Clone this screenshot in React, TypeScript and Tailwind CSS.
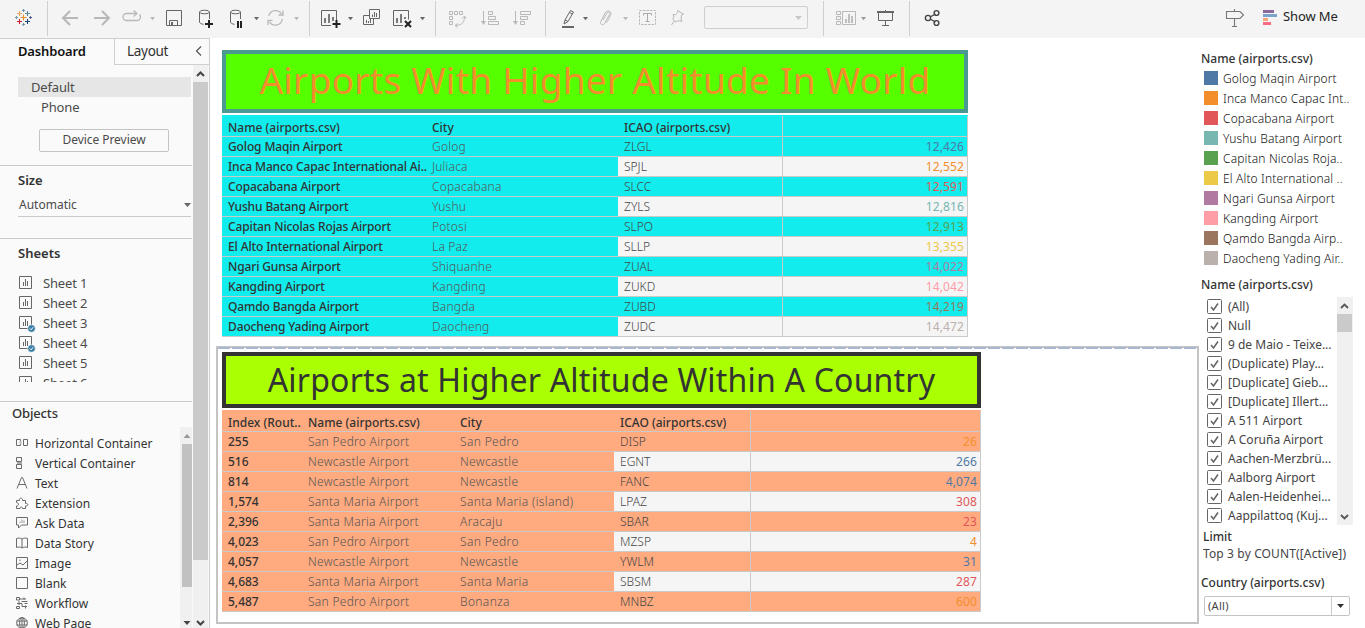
import React from "react";

const Slot = ({ x, w, children }: { x: number; w: number; children?: React.ReactNode }) => (
  <svg width={w} height={38} viewBox={`${x} 0 ${w} 38`} fill="none" className="shrink-0">
    {children}
  </svg>
);
const Caret = ({ x, c = "#666" }: { x: number; c?: string }) => <path d={`M${x} 17h5l-2.5 3.2z`} fill={c} />;
const Sep = () => <div className="mt-px h-[35px] w-px shrink-0 bg-[#cfcfcf]" />;

const D = "#666";
const G = "#b8b8b8";

function Cross({ x, y, r, c }: { x: number; y: number; r: number; c: string }) {
  return <path d={`M${x - r} ${y}h${2 * r}M${x} ${y - r}v${2 * r}`} stroke={c} strokeWidth="1.1" />;
}

function Toolbar() {
  return (
    <header className="flex h-[38px] shrink-0 bg-[#f4f4f4]">
      <Slot x={0} w={47}>
        <Cross x={23.5} y={17.5} r={3} c="#eb912c" />
        <Cross x={19.5} y={13.5} r={2.5} c="#e8a55c" />
        <Cross x={27.5} y={13.5} r={2.5} c="#59879b" />
        <Cross x={19.5} y={21.5} r={2.5} c="#c72037" />
        <Cross x={27.5} y={21.5} r={2.5} c="#1f447e" />
        <Cross x={23.5} y={10.5} r={1.5} c="#7099a5" />
        <Cross x={23.5} y={24.5} r={1.5} c="#7199a6" />
        <Cross x={16.5} y={17.5} r={1.5} c="#7199a6" />
        <Cross x={30.5} y={17.5} r={1.5} c="#5b6591" />
      </Slot>
      <Sep />
      <Slot x={48} w={70}>
        <path d="M78 18H63M70 11l-7 7 7 7M94 18h15M102 11l7 7-7 7" stroke={G} strokeWidth="2" />
      </Slot>
      <Slot x={118} w={42}>
        <path d="M136 13.500h-9.500a3.500 3.500 0 0 0 0 7h10.500a3.500 3.500 0 0 0 3.500-3.500c0-1-.3-1.800-1-2.500" stroke={G} strokeWidth="1.300" />
        <path d="M133.500 10.500l3.500 3-3.500 3" stroke={G} strokeWidth="1.200" />
        <Caret x={150} c={G} />
      </Slot>
      <Slot x={160} w={30}>
        <path d="M166.500 10.500h15v15h-15zM169.500 25v-4.500h8V25" stroke={D} />
        <path d="M171 22h2v3h-2z" fill={D} />
      </Slot>
      <Slot x={190} w={73}>
        <path d="M199.500 12v10c0 1 1.500 2 4 2.300M209.500 12v7" stroke={D} />
        <ellipse cx="204.500" cy="12" rx="5" ry="1.800" stroke={D} />
        <path d="M205 24h8M209 20v8" stroke="#222" strokeWidth="2" />
        <path d="M230.500 12v10c0 1 1.500 2 4 2.300M240.500 12v7" stroke={D} />
        <ellipse cx="235.500" cy="12" rx="5" ry="1.800" stroke={D} />
        <path d="M238 21v7M241 21v7" stroke="#222" strokeWidth="2" />
        <Caret x={254} />
      </Slot>
      <Slot x={263} w={46}>
        <path d="M268.800 16a7 7 0 0 1 12.800-2M282.300 19a7 7 0 0 1-12.800 3" stroke={G} strokeWidth="1.300" />
        <path d="M283 10.500v4.500h-4.500M268 25v-4.500h4.500" stroke={G} strokeWidth="1.300" />
        <Caret x={294} c={G} />
      </Slot>
      <Sep />
      <Slot x={310} w={125}>
        <path d="M331 25.500h-9.500v-15h15v10" stroke={D} />
        <path d="M325 23v-5M329 23v-9M333 21v-4" stroke={D} strokeWidth="1.700" />
        <path d="M332.500 24h8M336.500 20v8" stroke="#222" strokeWidth="2" />
        <Caret x={348} />
        <path d="M369.500 9.500h10v9h-10zM369 15.500h-5.500v9h10V19" stroke={D} />
        <path d="M372.500 17v-2.500M374.500 17v-5M376.500 17v-4M366.500 23v-3M368.500 23v-2M370.500 23v-4" stroke={D} />
        <path d="M403 25.500h-9.500v-15h15v9" stroke={D} />
        <path d="M397 23v-5M401 23v-9M405 19v-2" stroke={D} strokeWidth="1.700" />
        <path d="M405 21l6 6M411 21l-6 6" stroke="#222" strokeWidth="2" />
        <Caret x={420} />
      </Slot>
      <Sep />
      <Slot x={436} w={109}>
        <path d="M449.500 11.500h3v3h-3zM454.500 11.500h3v3h-3zM459.500 11.500h3v3h-3zM449.500 16.500h3v3h-3zM449.500 21.500h3v3h-3z" stroke={G} />
        <path d="M464.500 17c0 5-2.500 8-8.500 8.500M462 18.500l2.500-2.500 2 2.500M457.500 23.500l-2.500 2 2.500 2" stroke={G} />
        <path d="M483.500 11v12M488.500 11.500h4v3h-4zM488.500 16.500h7v3h-7zM488.500 21.500h10v3h-10z" stroke={G} />
        <path d="M481 21h5l-2.500 4z" fill={G} />
        <path d="M515.500 11v12M520.500 11.500h10v3h-10zM520.500 16.500h7v3h-7zM520.500 21.500h4v3h-4z" stroke={G} />
        <path d="M513 21h5l-2.500 4z" fill={G} />
      </Slot>
      <Sep />
      <Slot x={546} w={152}>
        <path d="M562 27h12" stroke={D} strokeWidth="2" />
        <path d="M564 24l1-4 5.500-9.500 3 1.500-5.500 9.500zM565 20l3 1.500M569.500 12.500l3 1.500" stroke={D} />
        <Caret x={583} />
        <path d="M603 20l4-7c1-1.700 3.500-.5 2.500 1.500l-5 9c-1.500 2.500-5 .8-3.800-1.800l4.300-8.500c1.500-3.500 6.500-2.500 6 1-.2 1-3.500 7-4.500 8.500" stroke={G} />
        <Caret x={623} c={G} />
        <path d="M639.500 10.500h16v14h-16z" stroke={G} strokeDasharray="2.500 1" />
        <path d="M643.500 15.500v-2h8v2M647.500 13.500v8M645.500 21.500h4" stroke="#aaa" />
        <path d="M677.500 10.500l6 3.500-2 1-.5 4 .8 2.500-3.500-.8-2.500 1.300-3.300-3 1.500-2-1-2.500 2.500.3 2.500-2.500zM675 20l-3.500 5" stroke={G} />
      </Slot>
      <div className="ml-[6px] mt-[6px] flex h-[23px] w-[104px] shrink-0 items-center justify-end rounded-[2px] border border-[#cfcfcf] pr-[5px]">
        <svg width="7" height="4"><path d="M0 0h7L3.500 4z" fill="#c8c8c8" /></svg>
      </div>
      <div className="w-[15px] shrink-0" />
      <Sep />
      <Slot x={824} w={85}>
        <path d="M836.500 11.500h4v3h-4zM836.500 16.500h4v3h-4zM836.500 21.500h4v3h-4zM842.500 11.500h13v13h-13z" stroke={G} />
        <path d="M846 23v-4M849 23v-9M852 23v-7" stroke={G} strokeWidth="1.800" />
        <Caret x={861} c="#999" />
        <path d="M877 12h17" stroke={D} strokeWidth="2" />
        <path d="M885.500 10v2M878.500 13v7.500h14V13M885.500 21v4M882 25.500h7" stroke={D} />
      </Slot>
      <Sep />
      <Slot x={910} w={40}>
        <path d="M930 17l5.500-3M930 19l5.500 3" stroke="#444" strokeWidth="1.300" />
        <circle cx="928" cy="18" r="2.600" stroke="#444" strokeWidth="1.400" />
        <circle cx="936.500" cy="13" r="2.400" stroke="#444" strokeWidth="1.400" />
        <circle cx="936.500" cy="23" r="2.400" stroke="#444" strokeWidth="1.400" />
      </Slot>
      <div className="flex-1" />
      <Slot x={1220} w={62}>
        <path d="M1226.500 11.500h13.500l3.500 3.500-3.500 3.500h-13.500zM1234.500 9v2.500M1234.500 18.500v8M1232 26.500h5" stroke="#777" strokeWidth="1.100" />
        <path d="M1263 10h11v3h-11z" fill="#8b6a9a" />
        <path d="M1263 14h14v3h-14z" fill="#7ba3cc" />
        <path d="M1263 18h5v3h-5z" fill="#f4a67a" />
        <path d="M1263 22h8v3h-8z" fill="#fa6a80" />
      </Slot>
      <span className="mt-[8px] w-[83px] pl-px text-[13px] leading-[17px] tracking-[-0.1px] whitespace-nowrap text-[#222]">Show Me</span>
    </header>
  );
}

const sheets = ["Sheet 1", "Sheet 2", "Sheet 3", "Sheet 4", "Sheet 5", "Sheet 6"];

const objects: [string, React.ReactNode][] = [
  ["Horizontal Container", <><path d="M.5 3.500h4v6h-4zM7.500 3.500h4v6h-4z" /><path d="M3.500 4.500h2v4h-2z" fill="#bbb" stroke="none" /></>],
  ["Vertical Container", <><path d="M.5 1.500h5v4h-5zM.5 8.500h5v4h-5z" /><path d="M1 6h5v2H1z" fill="#aaa" stroke="none" /></>],
  ["Text", <path d="M1 12.500L5.500 1.500h1L11 12.500M3 8.500h6.500" />],
  ["Extension", <path d="M.5 6.500V4.500h3c-1-2.500 3-3.500 3-.5v.5h3v3c3-.8 3 3 0 2.500v2.500h-3c0-2-2.500-2-2.500 0H.500v-2.500c2.500.3 2.500-3.500 0-3.500z" />],
  ["Ask Data", <><path d="M.5 1.500h11v7.500H5.500l-3 3V9h-2z" /><path d="M4 7V5.500M6 7V3.500M8 7V4.500" stroke="#999" /></>],
  ["Data Story", <path d="M.5 2.500c2-.8 4-.5 5.500.5 1.500-1 3.500-1.300 5.500-.5v9c-2-.8-4-.5-5.500.5-1.500-1-3.500-1.300-5.500-.5zM6 3v9" />],
  ["Image", <path d="M.5 1.500h11v11H.500zM1 9l3-2 3 2 4-4M4 3.500v1.500" />],
  ["Blank", <path d="M.5 1.500h11v11H.500z" />],
  ["Workflow", <path d="M.5 1.500h3v2.500h-3zM3.500 3H10M5.500 5.500h6M8 1.500v2M1 7.500h5v3H11M3 5v4M.5 10.500h3v2h-3zM8.500 7.500h3M9.500 9.500v3" />],
  ["Web Page", <><circle cx="6" cy="7" r="5.300" /><ellipse cx="6" cy="7" rx="2.400" ry="5.300" /><path d="M.5 5h11M.5 9h11M6 1.500v11" /></>],
];

function LeftPanel() {
  return (
    <aside className="flex w-[210px] shrink-0 flex-col border-t border-r border-[#cfcfcf] bg-[#fafafa]">
      <div className="flex h-[26px] shrink-0">
        <div className="w-[114px] pt-[3px] pl-[18px] text-[13px] leading-[18px] font-semibold tracking-[-0.15px] text-[#111]">Dashboard</div>
        <div className="flex flex-1 items-start justify-between border-b border-l border-[#cfcfcf] pt-[3px] pr-[7px] pl-[12px] text-[13.5px] leading-[18px] tracking-[-0.3px] text-[#333]">
          <span>Layout</span>
          <svg width="7" height="10" className="mt-[4px]"><path d="M6 .5L1.500 5 6 9.500" fill="none" stroke="#555" strokeWidth="1.200" /></svg>
        </div>
      </div>
      <div className="flex min-h-0 flex-1">
        <div className="flex w-[193px] min-w-0 flex-col overflow-hidden text-[13px] tracking-[-0.15px] text-[#4b4b4b]">
          <div className="mt-[12px] mr-[2px] ml-[18px] h-[20px] shrink-0 bg-[#e6e6e6] pl-[13px] leading-[20px]">Default</div>
          <div className="h-[20px] shrink-0 pl-[41px] leading-[20px]">Phone</div>
          <div className="mt-[12px] ml-[39px] h-[23px] w-[130px] shrink-0 rounded-[2px] border border-[#c4c4c4] text-center text-[12px] leading-[20px] tracking-[-0.05px]">Device Preview</div>
          <div className="mt-[13px] h-px w-[192px] shrink-0 bg-[#cacaca]" />
          <div className="h-[28px] shrink-0 pl-[18px] text-[13px] leading-[29px] font-semibold tracking-normal text-[#333]">Size</div>
          <div className="mr-[2px] ml-[18px] flex h-[23px] shrink-0 items-center justify-between border-b border-[#cacaca] pl-px text-[12px] tracking-[0px]">
            <span>Automatic</span>
            <svg width="7" height="4"><path d="M0 0h7L3.500 4z" fill="#666" /></svg>
          </div>
          <div className="mt-[21px] h-px w-[192px] shrink-0 bg-[#cacaca]" />
          <div className="h-[34px] shrink-0 pl-[18px] leading-[29px] font-semibold tracking-normal text-[#333]">Sheets</div>
          <div className="h-[109px] shrink-0 overflow-hidden">
            {sheets.map((s, i) => (
              <div key={s} className="flex h-[20px] pl-[19px] leading-[20px]">
                <svg width="24" height="20" fill="none" stroke="#666" className="shrink-0">
                  <path d="M.5 3.500h12v12H.500zM4.500 13V9M6.500 13V6M8.500 13V8" />
                  {(i === 2 || i === 3) && (
                    <>
                      <circle cx="12.500" cy="15.500" r="3.800" fill="#3c7fa6" stroke="#fafafa" strokeWidth=".6" />
                      <path d="M10.800 15.500l1.300 1.300 2-2.500" stroke="#fff" />
                    </>
                  )}
                </svg>
                {s}
              </div>
            ))}
          </div>
          <div className="mt-[19px] h-px w-[192px] shrink-0 bg-[#cacaca]" />
          <div className="h-[25px] shrink-0 pl-[12px] leading-[23px] font-medium text-[#333]">Objects</div>
          <div className="flex min-h-0 flex-1 overflow-hidden">
            <div className="w-[180px] pt-[6px] tracking-normal text-[#333]">
              {objects.map(([n, ic]) => (
                <div key={n} className="flex h-[20px] pl-[16px] text-[12px] leading-[21px] whitespace-nowrap">
                  <svg width="19" height="20" fill="none" stroke="#6b6b6b" className="shrink-0"><g transform="translate(0 3)">{ic}</g></svg>
                  {n}
                </div>
              ))}
            </div>
            <div className="flex w-[12px] flex-col items-end bg-[#f0f0f0]">
              <svg width="10" height="17"><path d="M1.500 11h7L5 7z" fill="#999" /></svg>
              <div className="h-[143px] w-[10px] bg-[#c1c1c1]" />
              <div className="flex-1" />
              <svg width="10" height="12"><path d="M1.500 5h7L5 9z" fill="#444" /></svg>
            </div>
          </div>
        </div>
        <div className="flex w-[15px] flex-col bg-[#f0f0f0]">
          <svg width="15" height="17" fill="none"><path d="M4 11l3.500-3.500L11 11" stroke="#444" strokeWidth="2" /></svg>
          <div className="h-[478px] bg-[#cacaca]" />
          <div className="flex-1" />
          <svg width="15" height="14" fill="none"><path d="M4 7l3.500 3.500L11 7" stroke="#444" strokeWidth="2" /></svg>
        </div>
      </div>
    </aside>
  );
}

const world = [
  ["Golog Maqin Airport", "Golog", "ZLGL", "12,426", "text-[#4e79a7]"],
  ["Inca Manco Capac International Ai..", "Juliaca", "SPJL", "12,552", "text-[#f28e2b]"],
  ["Copacabana Airport", "Copacabana", "SLCC", "12,591", "text-[#e15759]"],
  ["Yushu Batang Airport", "Yushu", "ZYLS", "12,816", "text-[#76b7b2]"],
  ["Capitan Nicolas Rojas Airport", "Potosi", "SLPO", "12,913", "text-[#59a14f]"],
  ["El Alto International Airport", "La Paz", "SLLP", "13,355", "text-[#edc948]"],
  ["Ngari Gunsa Airport", "Shiquanhe", "ZUAL", "14,022", "text-[#b07aa1]"],
  ["Kangding Airport", "Kangding", "ZUKD", "14,042", "text-[#ff9da7]"],
  ["Qamdo Bangda Airport", "Bangda", "ZUBD", "14,219", "text-[#9c755f]"],
  ["Daocheng Yading Airport", "Daocheng", "ZUDC", "14,472", "text-[#bab0ac]"],
];

const country = [
  ["255", "San Pedro Airport", "San Pedro", "DISP", "26", "text-[#f28e2b]"],
  ["516", "Newcastle Airport", "Newcastle", "EGNT", "266", "text-[#4e79a7]"],
  ["814", "Newcastle Airport", "Newcastle", "FANC", "4,074", "text-[#4e79a7]"],
  ["1,574", "Santa Maria Airport", "Santa Maria (island)", "LPAZ", "308", "text-[#e15759]"],
  ["2,396", "Santa Maria Airport", "Aracaju", "SBAR", "23", "text-[#e15759]"],
  ["4,023", "San Pedro Airport", "San Pedro", "MZSP", "4", "text-[#f28e2b]"],
  ["4,057", "Newcastle Airport", "Newcastle", "YWLM", "31", "text-[#4e79a7]"],
  ["4,683", "Santa Maria Airport", "Santa Maria", "SBSM", "287", "text-[#e15759]"],
  ["5,487", "San Pedro Airport", "Bonanza", "MNBZ", "600", "text-[#f28e2b]"],
];

function Main() {
  return (
    <main className="flex w-[989px] shrink-0 flex-col pt-[12px] pl-[6px]">
      <section className="ml-[6px] flex w-[746px] flex-col gap-[2px]">
        <h1 className="h-[63px] border-4 border-[#4a9993] bg-[#55ff00] text-center text-[37px] leading-[52px] tracking-[0.24px] whitespace-nowrap text-[#f28e2b]">
          Airports With Higher Altitude In World
        </h1>
        <div className="text-[12px] whitespace-nowrap">
          <div className="flex h-[22px] border-b border-[#cacaca] bg-[#12ecec] pt-[4px] leading-[17px] font-medium text-[#333]">
            <div className="w-[204px] pl-[6px]">Name (airports.csv)</div>
            <div className="w-[192px] pl-[6px]">City</div>
            <div className="w-[164px] pl-[6px]">ICAO (airports.csv)</div>
            <div className="-mt-[3px] flex-1 border-x border-[#cacaca]" />
          </div>
          {world.map(([n, c, k, v, col], i) => (
            <div key={n} className="flex h-[20px] border-b border-[#cacaca] bg-[#12ecec] leading-[19px]">
              <div className="w-[204px] pl-[6px] font-medium tracking-[-0.13px] text-[#333]">{n}</div>
              <div className="w-[192px] pl-[6px] font-light tracking-[0.2px] text-[#555]">{c}</div>
              <div className={i % 2 ? "flex flex-1 bg-[#f5f5f5]" : "flex flex-1"}>
                <div className="w-[164px] pl-[6px] font-light text-[#444]">{k}</div>
                <div className={"flex-1 border-x border-[#cacaca] pr-[3px] text-right tracking-[0.1px] " + col}>{v}</div>
              </div>
            </div>
          ))}
        </div>
      </section>
      <section className="mt-[9px] flex h-[278px] w-[983px] flex-col border-2 border-[#c4c4c4] pl-[4px]">
        <svg width="975" height="5" className="-mt-px -ml-[4px] w-[979px] shrink-0"><path d="M0 1h979" stroke="#a9b8d0" strokeWidth="2" strokeDasharray="12 2" /></svg>
        <div className="flex w-[759px] flex-col gap-[2px]">
          <h2 className="h-[56px] border-4 border-[#333] bg-[#aaff00] text-center text-[32px] leading-[47px] tracking-[0.2px] whitespace-nowrap text-[#333]">
            Airports at Higher Altitude Within A Country
          </h2>
          <div className="text-[12px] whitespace-nowrap">
            <div className="flex h-[22px] border-b border-[#cacaca] bg-[#ffaa7f] pt-[4px] leading-[17px] font-medium text-[#333]">
              <div className="w-[80px] pl-[6px]">Index (Rout..</div>
              <div className="w-[152px] pl-[6px]">Name (airports.csv)</div>
              <div className="w-[160px] pl-[6px]">City</div>
              <div className="w-[136px] pl-[6px]">ICAO (airports.csv)</div>
              <div className="-mt-[3px] flex-1 border-x border-[#cacaca]" />
            </div>
            {country.map(([x, n, c, k, v, col], i) => (
              <div key={x} className="flex h-[20px] border-b border-[#cacaca] bg-[#ffaa7f] leading-[19px]">
                <div className="w-[80px] pl-[6px] font-medium text-[#333]">{x}</div>
                <div className="w-[152px] pl-[6px] font-light tracking-[0.28px] text-[#555]">{n}</div>
                <div className="w-[160px] pl-[6px] font-light tracking-[0.35px] text-[#555]">{c}</div>
                <div className={i % 2 ? "flex flex-1 bg-[#f5f5f5]" : "flex flex-1"}>
                  <div className="w-[136px] pl-[6px] font-light text-[#444]">{k}</div>
                  <div className={"flex-1 border-x border-[#cacaca] pr-[3px] text-right tracking-[0.1px] " + col}>{v}</div>
                </div>
              </div>
            ))}
          </div>
        </div>
      </section>
    </main>
  );
}

const legend = [
  ["Golog Maqin Airport", "bg-[#4e79a7]"],
  ["Inca Manco Capac Int..", "bg-[#f28e2b]"],
  ["Copacabana Airport", "bg-[#e15759]"],
  ["Yushu Batang Airport", "bg-[#76b7b2]"],
  ["Capitan Nicolas Roja..", "bg-[#59a14f]"],
  ["El Alto International ..", "bg-[#edc948]"],
  ["Ngari Gunsa Airport", "bg-[#b07aa1]"],
  ["Kangding Airport", "bg-[#ff9da7]"],
  ["Qamdo Bangda Airp..", "bg-[#9c755f]"],
  ["Daocheng Yading Air..", "bg-[#bab0ac]"],
];

const filters = [
  "(All)", "Null", "9 de Maio - Teixe...", "(Duplicate) Play...", "[Duplicate] Gieb...", "[Duplicate] Illert...",
  "A 511 Airport", "A Coruña Airport", "Aachen-Merzbrü...", "Aalborg Airport", "Aalen-Heidenhei...", "Aappilattoq (Kuj...",
];

function RightPanel() {
  return (
    <aside className="flex flex-1 flex-col pl-[2px] text-[12px] whitespace-nowrap text-[#444]">
      <div className="mt-[12px] h-[18px] leading-[17px] font-medium text-[#333]">Name (airports.csv)</div>
      {legend.map(([n, c]) => (
        <div key={n} className="flex h-[20px] items-center gap-[5px] pl-[3px] leading-[20px] tracking-[0.1px]">
          <span className={"mb-px size-[14px] shrink-0 " + c} />
          <span className="pt-px font-light tracking-[0.15px] text-[#111]">{n}</span>
        </div>
      ))}
      <div className="mt-[8px] h-[17px] leading-[17px] font-medium text-[#333]">Name (airports.csv)</div>
      <div className="mt-[4px] flex h-[228px]">
        <div className="w-[136px]">
          {filters.map((f) => (
            <div key={f} className="flex h-[19px] items-center gap-[6px] pl-[6px] leading-[19px]">
              <svg width="15" height="15" fill="none" stroke="#666" className="shrink-0">
                <rect x=".5" y=".5" width="14" height="14" rx="1" />
                <path d="M4 8l2.500 3L11 4.500" strokeWidth="1.600" />
              </svg>
              <span>{f}</span>
            </div>
          ))}
        </div>
        <div className="flex w-[16px] flex-col bg-[#f0f0f0]">
          <svg width="15" height="17" fill="none"><path d="M4 11l3.500-3.500L11 11" stroke="#555" strokeWidth="1.800" /></svg>
          <div className="h-[18px] w-[15px] bg-[#cacaca]" />
          <div className="flex-1" />
          <svg width="15" height="17" fill="none"><path d="M4 7l3.500 3.500L11 7" stroke="#555" strokeWidth="1.800" /></svg>
        </div>
      </div>
      <div className="mt-[4px] h-[17px] pl-[2px] leading-[16px] font-medium text-[#333]">Limit</div>
      <div className="h-[17px] pl-[2px] leading-[16px] tracking-[0.13px]">Top 3 by COUNT([Active])</div>
      <div className="mt-[12px] h-[17px] leading-[16px] font-medium text-[#333]">Country (airports.csv)</div>
      <div className="mt-[4px] ml-[3px] flex h-[20px] w-[146px] rounded-[2px] border border-[#c4c4c4] text-[11px] leading-[17px]">
        <span className="flex-1 pl-[3px] tracking-[0.3px]">(All)</span>
        <span className="flex w-[18px] items-center justify-center border-l border-[#cacaca]">
          <svg width="7" height="4"><path d="M0 0h7L3.500 4z" fill="#333" /></svg>
        </span>
      </div>
    </aside>
  );
}

export default function App() {
  return (
    <div className="flex h-[628px] w-[1365px] flex-col overflow-hidden bg-white font-['Noto_Sans',sans-serif]">
      <Toolbar />
      <div className="flex min-h-0 flex-1">
        <LeftPanel />
        <Main />
        <RightPanel />
      </div>
    </div>
  );
}
